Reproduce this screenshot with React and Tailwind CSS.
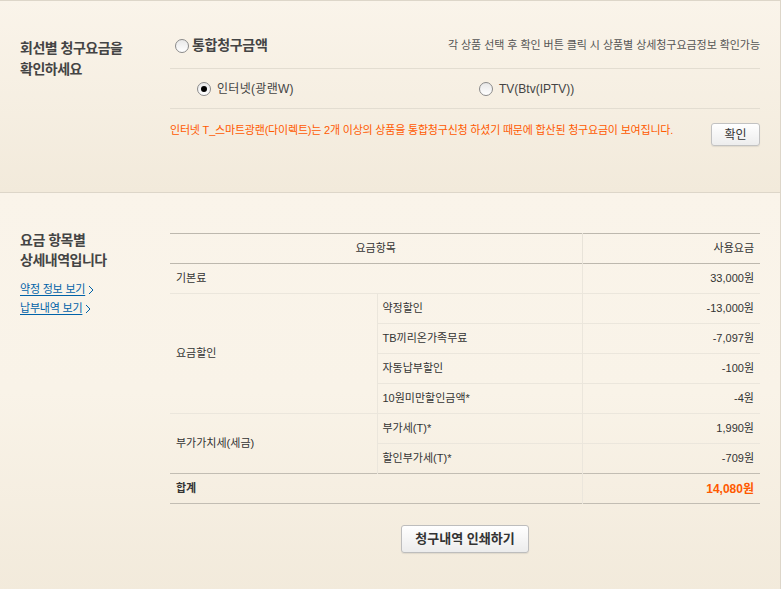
import React from 'react';

const font = "font-['Liberation_Sans','Noto_Sans_CJK_KR',sans-serif]";

// Radio circle drawn with spans
const Radio = ({ checked = false }) => (
  <span className="inline-flex w-[14px] h-[14px] rounded-full border border-[#8a8a8a] bg-gradient-to-b from-[#e8e8e8] to-white items-center justify-center shrink-0">
    {checked && <span className="w-[6px] h-[6px] rounded-full bg-black"></span>}
  </span>
);

// Small ">" after the side links
const Chevron = () => (
  <svg width="6" height="10" viewBox="0 0 6 10" className="ml-[3px] mt-[1px]">
    <path d="M1 1l4 4-4 4" fill="none" stroke="#0062a8" strokeWidth="1" />
  </svg>
);

const subRows = [
  { name: '약정할인', value: '-13,000원' },
  { name: 'TB끼리온가족무료', value: '-7,097원' },
  { name: '자동납부할인', value: '-100원' },
  { name: '10원미만할인금액*', value: '-4원' },
];

const taxRows = [
  { name: '부가세(T)*', value: '1,990원' },
  { name: '할인부가세(T)*', value: '-709원' },
];

export default function App() {
  return (
    <div className={`${font} w-[781px] border-t border-r border-[#ddd6c9] text-[#333]`}>
      {/* Section 1 */}
      <section className="flex h-[192px] border-b border-[#ddd6c9] bg-gradient-to-b from-[#faf4ea] to-[#f2eadb]">
        <div className="w-[170px] pl-[20px] pt-[37px]">
          <h2 className="text-[14px] font-bold leading-[21px] tracking-[-0.5px] text-[#444]">
            회선별 청구요금을
            <br />
            확인하세요
          </h2>
        </div>
        <div className="w-[590px]">
          <div className="flex items-center justify-between h-[68px] pt-[22px] border-b border-[#e3ddd1]">
            <label className="flex items-center gap-[3px] pl-[5px]">
              <Radio />
              <span className="text-[14px] font-bold tracking-[-0.3px] text-[#444]">통합청구금액</span>
            </label>
            <span className="text-[11px] tracking-[-0.05px] text-[#555]">
              각 상품 선택 후 확인 버튼 클릭 시 상품별 상세청구요금정보 확인가능
            </span>
          </div>
          <div className="flex items-center h-[40px] border-b border-[#e3ddd1]">
            <label className="flex items-center gap-[6px] pl-[27px] w-[309px]">
              <Radio checked />
              <span className="text-[12px] tracking-[0.3px] text-[#444]">인터넷(광랜W)</span>
            </label>
            <label className="flex items-center gap-[6px]">
              <Radio />
              <span className="text-[12px] text-[#444]">TV(Btv(IPTV))</span>
            </label>
          </div>
          <div className="flex items-start justify-between pt-[13px]">
            <p className="text-[11px] leading-[16px] tracking-[-0.2px] text-[#ff5a00]">
              인터넷 T_스마트광랜(다이렉트)는 2개 이상의 상품을 통합청구신청 하셨기 때문에 합산된 청구요금이 보여집니다.
            </p>
            <button className="mt-[1px] w-[49px] h-[23px] rounded-[3px] border border-[#c2c2c2] bg-gradient-to-b from-white to-[#ededed] text-[12px] text-[#333] shadow-[0_1px_1px_rgba(0,0,0,0.08)]">
              확인
            </button>
          </div>
        </div>
      </section>

      {/* Section 2 */}
      <section className="flex h-[400px] bg-gradient-to-b from-[#faf4ea] via-[#f9f3e8] to-[#f2eadb]">
        <div className="w-[170px] pl-[20px] pt-[37px]">
          <h2 className="text-[14px] font-bold leading-[20px] tracking-[-0.5px] text-[#444]">
            요금 항목별
            <br />
            상세내역입니다
          </h2>
          <div className="mt-[10px] flex flex-col items-start text-[11px] leading-[19px] tracking-[-0.2px] text-[#0062a8]">
            <a className="flex items-center">
              <span className="underline underline-offset-2">약정 정보 보기</span>
              <Chevron />
            </a>
            <a className="flex items-center">
              <span className="underline underline-offset-2">납부내역 보기</span>
              <Chevron />
            </a>
          </div>
        </div>
        <div className="w-[590px] pt-[40px]">
          <table className="w-[590px] border-collapse text-[11px] text-[#333]">
            <colgroup>
              <col className="w-[207px]" />
              <col className="w-[205px]" />
              <col className="w-[178px]" />
            </colgroup>
            <thead>
              <tr className="h-[30px] border-t border-b border-[#bdb8ae]">
                <th colSpan={2} className="font-normal text-center border-r border-[#e8e3d9]">요금항목</th>
                <th className="font-normal text-right pr-[6px]">사용요금</th>
              </tr>
            </thead>
            <tbody>
              <tr className="h-[30px] border-b border-[#ebe6dc]">
                <td colSpan={2} className="pl-[6px] border-r border-[#ebe6dc]">기본료</td>
                <td className="text-right pr-[6px]">33,000원</td>
              </tr>
              {subRows.map((row, i) => (
                <tr key={row.name} className="h-[30px] border-b border-[#ebe6dc]">
                  {i === 0 && (
                    <td rowSpan={4} className="pl-[6px] border-r border-[#ebe6dc]">요금할인</td>
                  )}
                  <td className="pl-[5px] border-r border-[#ebe6dc]">{row.name}</td>
                  <td className="text-right pr-[6px]">{row.value}</td>
                </tr>
              ))}
              {taxRows.map((row, i) => (
                <tr key={row.name} className={`h-[30px] border-b ${i === 1 ? 'border-[#c2bdb3]' : 'border-[#ebe6dc]'}`}>
                  {i === 0 && (
                    <td rowSpan={2} className="pl-[6px] border-r border-[#ebe6dc]">부가가치세(세금)</td>
                  )}
                  <td className="pl-[5px] border-r border-[#ebe6dc]">{row.name}</td>
                  <td className="text-right pr-[6px]">{row.value}</td>
                </tr>
              ))}
              <tr className="h-[30px] border-b border-[#c2bdb3]">
                <td colSpan={2} className="pl-[6px] font-bold border-r border-[#ebe6dc]">합계</td>
                <td className="text-right pr-[6px] font-bold text-[12px] text-[#ff5a00]">14,080원</td>
              </tr>
            </tbody>
          </table>
          <div className="flex justify-center mt-[21px]">
            <button className="w-[128px] h-[28px] rounded-[3px] border border-[#bdbdbd] bg-gradient-to-b from-white to-[#ececec] text-[13px] font-bold text-[#333] shadow-[0_1px_1px_rgba(0,0,0,0.08)]">
              청구내역 인쇄하기
            </button>
          </div>
        </div>
      </section>
    </div>
  );
}
